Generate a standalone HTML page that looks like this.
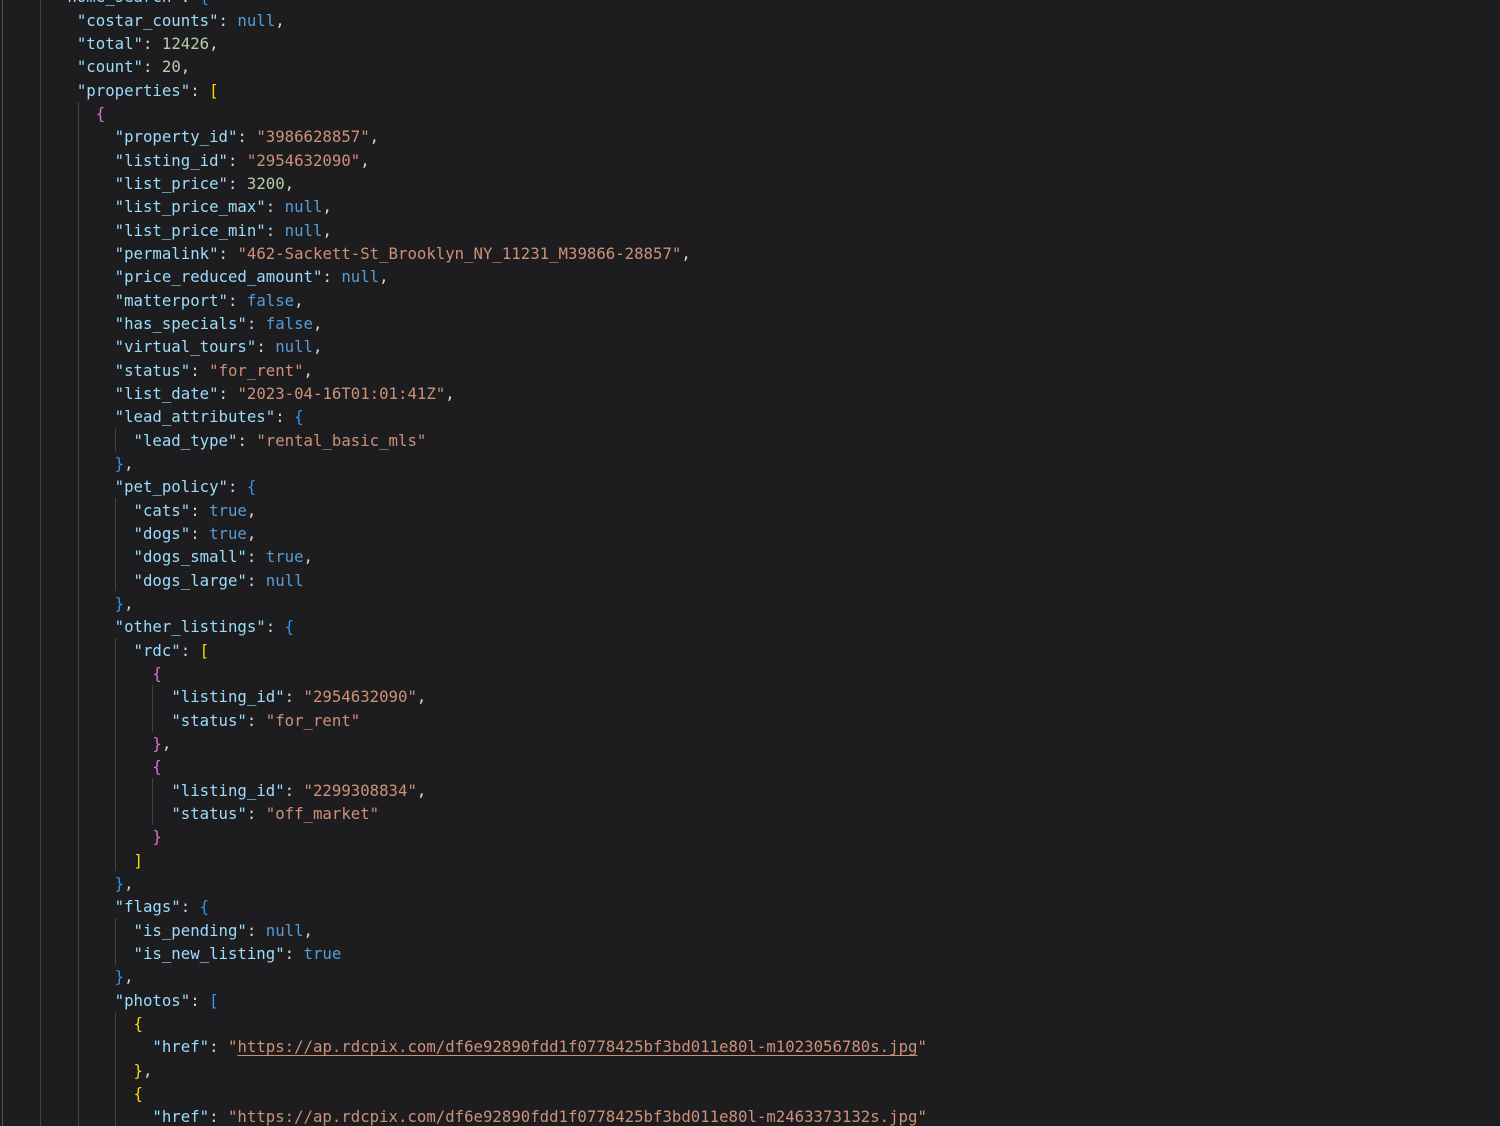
<!DOCTYPE html>
<html>
<head>
<meta charset="utf-8">
<style>
html,body{margin:0;padding:0;width:1500px;height:1126px;overflow:hidden;background:#1d1d1f;}
#wrap{position:relative;width:1500px;height:1126px;overflow:hidden;filter:blur(0.3px);}
pre{position:absolute;left:1.3px;top:-14.6px;margin:0;font-family:"DejaVu Sans Mono",monospace;font-size:15.7px;line-height:23.33px;color:#d4d4d4;}
.k{color:#9cdcfe}.s{color:#ce9178}.n{color:#b5cea8}.b{color:#569cd6}
.y{color:#ffd700}.p{color:#da70d6}.l{color:#2f95f5}
.u{text-decoration:underline;text-underline-offset:3px;}
.g{position:absolute;width:1px;background:#444446;}
</style>
</head>
<body>
<div id="wrap">
<div class="g" style="left:2px;top:0;height:1126px;background:#505052"></div>
<div class="g" style="left:40px;top:0;height:1126px"></div>
<div class="g" style="left:78px;top:102px;height:1024px"></div>
<div class="g" style="left:115px;top:428px;height:23px"></div>
<div class="g" style="left:115px;top:498px;height:93px"></div>
<div class="g" style="left:115px;top:638px;height:233px"></div>
<div class="g" style="left:115px;top:918px;height:47px"></div>
<div class="g" style="left:115px;top:1012px;height:114px"></div>
<div class="g" style="left:152px;top:685px;height:47px"></div>
<div class="g" style="left:152px;top:778px;height:47px"></div>
<pre>      <span class="k">"home_search"</span>: <span class="l">{</span>
        <span class="k">"costar_counts"</span>: <span class="b">null</span>,
        <span class="k">"total"</span>: <span class="n">12426</span>,
        <span class="k">"count"</span>: <span class="n">20</span>,
        <span class="k">"properties"</span>: <span class="y">[</span>
          <span class="p">{</span>
            <span class="k">"property_id"</span>: <span class="s">"3986628857"</span>,
            <span class="k">"listing_id"</span>: <span class="s">"2954632090"</span>,
            <span class="k">"list_price"</span>: <span class="n">3200</span>,
            <span class="k">"list_price_max"</span>: <span class="b">null</span>,
            <span class="k">"list_price_min"</span>: <span class="b">null</span>,
            <span class="k">"permalink"</span>: <span class="s">"462-Sackett-St_Brooklyn_NY_11231_M39866-28857"</span>,
            <span class="k">"price_reduced_amount"</span>: <span class="b">null</span>,
            <span class="k">"matterport"</span>: <span class="b">false</span>,
            <span class="k">"has_specials"</span>: <span class="b">false</span>,
            <span class="k">"virtual_tours"</span>: <span class="b">null</span>,
            <span class="k">"status"</span>: <span class="s">"for_rent"</span>,
            <span class="k">"list_date"</span>: <span class="s">"2023-04-16T01:01:41Z"</span>,
            <span class="k">"lead_attributes"</span>: <span class="l">{</span>
              <span class="k">"lead_type"</span>: <span class="s">"rental_basic_mls"</span>
            <span class="l">}</span>,
            <span class="k">"pet_policy"</span>: <span class="l">{</span>
              <span class="k">"cats"</span>: <span class="b">true</span>,
              <span class="k">"dogs"</span>: <span class="b">true</span>,
              <span class="k">"dogs_small"</span>: <span class="b">true</span>,
              <span class="k">"dogs_large"</span>: <span class="b">null</span>
            <span class="l">}</span>,
            <span class="k">"other_listings"</span>: <span class="l">{</span>
              <span class="k">"rdc"</span>: <span class="y">[</span>
                <span class="p">{</span>
                  <span class="k">"listing_id"</span>: <span class="s">"2954632090"</span>,
                  <span class="k">"status"</span>: <span class="s">"for_rent"</span>
                <span class="p">}</span>,
                <span class="p">{</span>
                  <span class="k">"listing_id"</span>: <span class="s">"2299308834"</span>,
                  <span class="k">"status"</span>: <span class="s">"off_market"</span>
                <span class="p">}</span>
              <span class="y">]</span>
            <span class="l">}</span>,
            <span class="k">"flags"</span>: <span class="l">{</span>
              <span class="k">"is_pending"</span>: <span class="b">null</span>,
              <span class="k">"is_new_listing"</span>: <span class="b">true</span>
            <span class="l">}</span>,
            <span class="k">"photos"</span>: <span class="l">[</span>
              <span class="y">{</span>
                <span class="k">"href"</span>: <span class="s">"<span class="u">https://ap.rdcpix.com/df6e92890fdd1f0778425bf3bd011e80l-m1023056780s.jpg</span>"</span>
              <span class="y">}</span>,
              <span class="y">{</span>
                <span class="k">"href"</span>: <span class="s">"https://ap.rdcpix.com/df6e92890fdd1f0778425bf3bd011e80l-m2463373132s.jpg"</span></pre>
</div>
</body>
</html>
